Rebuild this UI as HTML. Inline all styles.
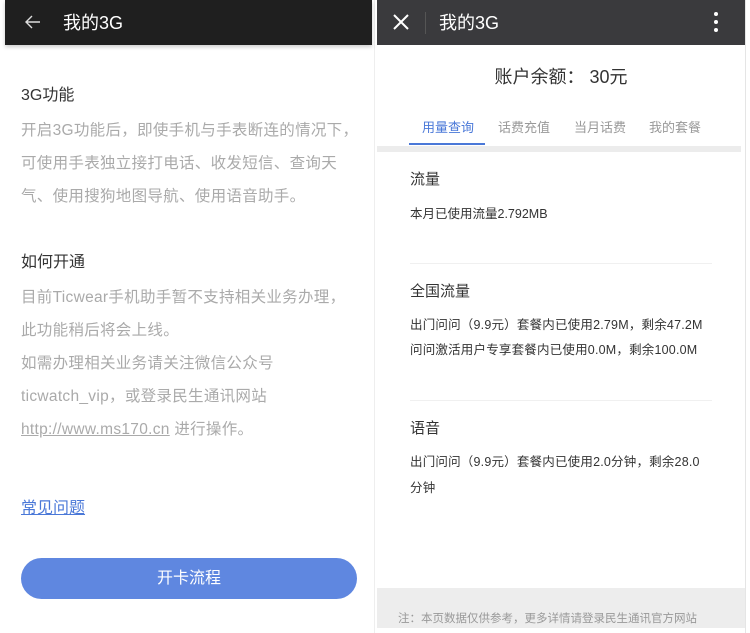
<!DOCTYPE html>
<html><head><meta charset="utf-8"><style>
*{margin:0;padding:0;box-sizing:border-box}
body{width:750px;height:633px;background:#fff;position:relative;overflow:hidden;font-family:"Liberation Sans","Noto Sans CJK SC",sans-serif}
.a{position:absolute;white-space:nowrap}
</style></head><body>
<!-- left -->
<div class="a" style="left:0;top:0;width:375px;height:633px;background:#fff;border-right:1px solid #eee"></div>
<div class="a" style="left:5px;top:0;width:367px;height:45px;background:#1f1f1f;box-shadow:0 2px 4px rgba(0,0,0,.2)"></div>
<svg class="a" style="left:24px;top:13px" width="18" height="18" viewBox="0 0 18 18"><path d="M16 9H2M8 3L2 9l6 6" stroke="#ddd" stroke-width="1.4" fill="none"/></svg>
<div class="a" style="left:63px;top:9px;font-size:18px;color:#fff">我的3G</div>
<div class="a" style="left:21px;top:81px;font-size:16px;color:#333">3G功能</div>
<div class="a" style="left:21px;top:114px;font-size:15.5px;color:#aaa;line-height:33px;letter-spacing:0.3px">开启3G功能后，即使手机与手表断连的情况下，<br>可使用手表独立接打电话、收发短信、查询天<br>气、使用搜狗地图导航、使用语音助手。</div>
<div class="a" style="left:21px;top:248px;font-size:16px;color:#333">如何开通</div>
<div class="a" style="left:21px;top:281px;font-size:15.5px;color:#aaa;line-height:33px;letter-spacing:0.3px">目前Ticwear手机助手暂不支持相关业务办理，<br>此功能稍后将会上线。<br>如需办理相关业务请关注微信公众号<br>ticwatch_vip，或登录民生通讯网站<br><span style="text-decoration:underline">http://www.ms170.cn</span> 进行操作。</div>
<div class="a" style="left:21px;top:494px;font-size:16px;color:#4a78d8;text-decoration:underline">常见问题</div>
<div class="a" style="left:21px;top:558px;width:336px;height:41px;border-radius:21px;background:#5f87e0;color:#fff;font-size:16px;text-align:center;line-height:41px">开卡流程</div>
<!-- right -->
<div class="a" style="left:377px;top:0;width:368px;height:45px;background:#3a3a3d"></div>
<svg class="a" style="left:392px;top:13px" width="18" height="18" viewBox="0 0 18 18"><path d="M2 2L16 16M16 2L2 16" stroke="#fff" stroke-width="2" fill="none"/></svg>
<div class="a" style="left:425px;top:12px;width:1px;height:22px;background:#555"></div>
<div class="a" style="left:439px;top:9px;font-size:18px;color:#fff">我的3G</div>
<div class="a" style="left:714px;top:12px;width:4px;height:4px;border-radius:2px;background:#fff;box-shadow:0 8px 0 #fff,0 16px 0 #fff"></div>
<div class="a" style="left:377px;top:63px;width:368px;text-align:center;font-size:18px;color:#333">账户余额： 30元</div>
<div class="a" style="left:422px;top:117px;font-size:13px;color:#4a78d8">用量查询</div>
<div class="a" style="left:498px;top:117px;font-size:13px;color:#999">话费充值</div>
<div class="a" style="left:574px;top:117px;font-size:13px;color:#999">当月话费</div>
<div class="a" style="left:649px;top:117px;font-size:13px;color:#999">我的套餐</div>
<div class="a" style="left:409px;top:143px;width:76px;height:2px;background:#4a78d8"></div>
<div class="a" style="left:377px;top:146px;width:364px;height:6px;background:#ececec"></div>
<div class="a" style="left:410px;top:168px;font-size:15px;color:#333">流量</div>
<div class="a" style="left:410px;top:203px;font-size:12.5px;color:#333">本月已使用流量2.792MB</div>
<div class="a" style="left:410px;top:263px;width:302px;height:1px;background:#f0f0f0"></div>
<div class="a" style="left:410px;top:280px;font-size:15px;color:#333">全国流量</div>
<div class="a" style="left:410px;top:313px;font-size:12.5px;color:#333;line-height:25px;letter-spacing:0.2px">出门问问（9.9元）套餐内已使用2.79M，剩余47.2M<br>问问激活用户专享套餐内已使用0.0M，剩余100.0M</div>
<div class="a" style="left:410px;top:400px;width:302px;height:1px;background:#f0f0f0"></div>
<div class="a" style="left:410px;top:417px;font-size:15px;color:#333">语音</div>
<div class="a" style="left:410px;top:449px;font-size:12.5px;color:#333;line-height:26px;letter-spacing:0.2px">出门问问（9.9元）套餐内已使用2.0分钟，剩余28.0<br>分钟</div>
<div class="a" style="left:377px;top:588px;width:368px;height:40px;background:#ededed"></div>
<div class="a" style="left:398px;top:610px;font-size:11.5px;color:#999">注：本页数据仅供参考，更多详情请登录民生通讯官方网站</div>
<div class="a" style="left:745px;top:0;width:1px;height:633px;background:#e5e5e5"></div>
</body></html>
